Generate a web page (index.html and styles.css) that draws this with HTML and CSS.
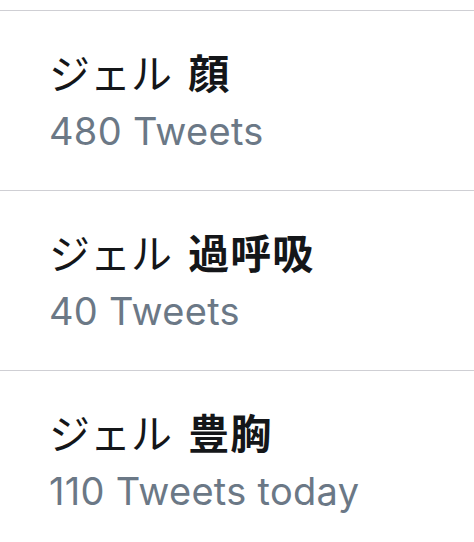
FILE: index.html
```html
<!DOCTYPE html>
<html lang="ja">
<head>
<meta charset="utf-8">
<link rel="stylesheet" href="styles.css">
</head>
<body>
<ul class="list">
  <li class="item">
    <div class="title">ジェル <strong>顔</strong></div>
    <div class="count">480 Tweets</div>
  </li>
  <li class="item">
    <div class="title">ジェル <strong>過呼吸</strong></div>
    <div class="count">40 Tweets</div>
  </li>
  <li class="item">
    <div class="title">ジェル <strong>豊胸</strong></div>
    <div class="count">110 Tweets today</div>
  </li>
</ul>
</body>
</html>
```

FILE: styles.css
```css
html, body {
  margin: 0;
  padding: 0;
  background: #ffffff;
}
body {
  overflow: hidden;
}
.list {
  list-style: none;
  margin: 0;
  padding: 10px 0 0 0;
}
.item {
  border-top: 1px solid #cfcfd4;
  height: 179px;
  padding: 0 0 0 49px;
  display: flex;
  flex-direction: column;
  justify-content: flex-start;
}
.title {
  margin-top: 36px;
  font-family: "Noto Sans CJK JP", sans-serif;
  font-size: 41px;
  line-height: 48px;
  word-spacing: 7px;
  color: #141619;
  font-weight: 400;
}
.title strong {
  font-weight: 700;
  letter-spacing: 1px;
}
.count {
  margin-top: 14px;
  font-family: Inter, "Noto Sans", sans-serif;
  font-size: 38px;
  line-height: 44px;
  letter-spacing: 0.3px;
  color: #6b7886;
}
```
